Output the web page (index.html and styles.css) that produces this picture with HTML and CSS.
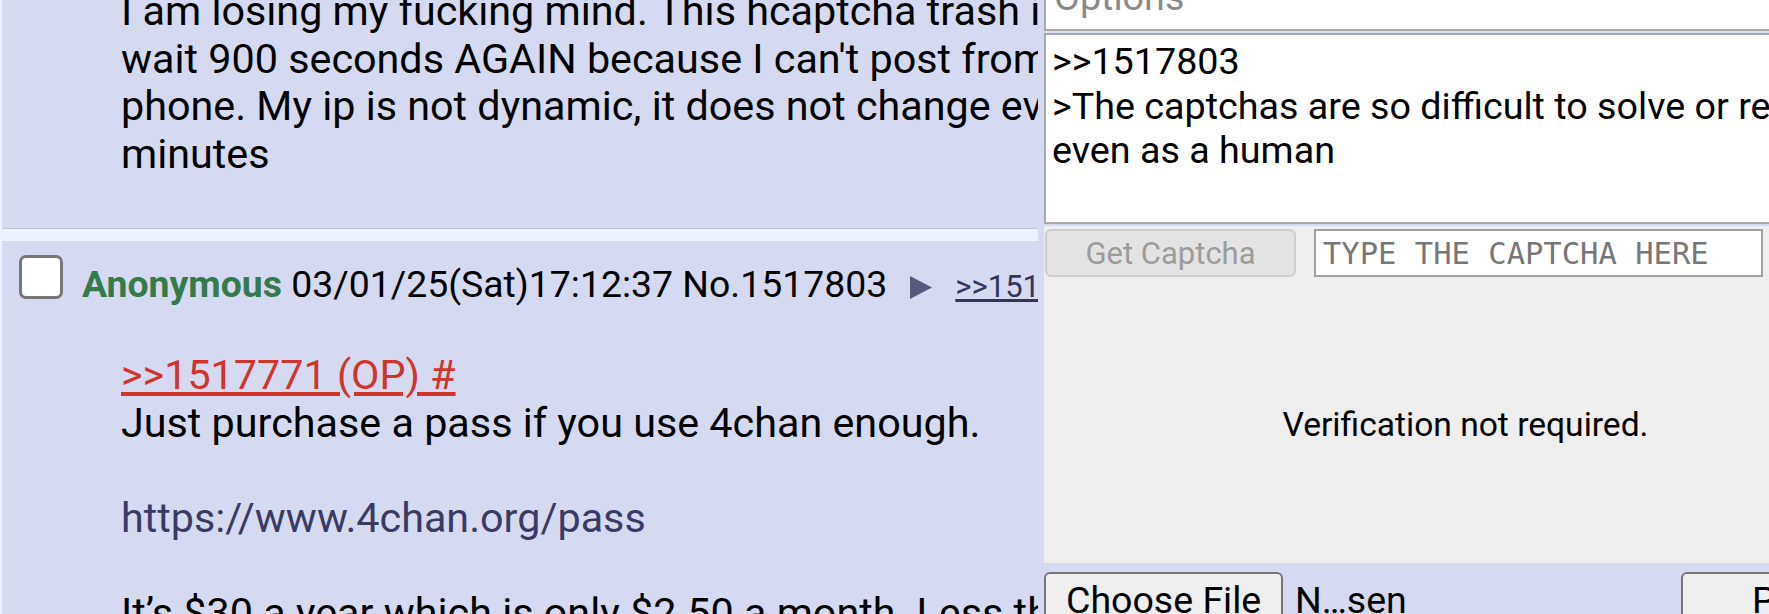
FILE: index.html
```html
<!DOCTYPE html>
<html lang="en">
<head>
<meta charset="utf-8">
<title>Thread</title>
<link rel="stylesheet" href="styles.css">
</head>
<body>
<div class="thread">
  <div class="post post-first">
    <div class="message nowrap">I am losing my fucking mind. This hcaptcha trash is making me<br>wait 900 seconds AGAIN because I can't post from my<br>phone. My ip is not dynamic, it does not change every few<br>minutes</div>
  </div>
  <div class="post">
    <div class="post-header">
      <span class="checkbox"></span><span class="name">Anonymous</span> <span class="date">03/01/25(Sat)17:12:37</span> <span class="num">No.1517803</span><span class="menu-arrow"><svg width="22" height="23" viewBox="0 0 22 23"><polygon points="0,0 22,11.5 0,23" fill="#575a7e"/></svg></span><a class="backlink">&gt;&gt;1517851</a>
    </div>
    <div class="message nowrap"><a class="quotelink">&gt;&gt;1517771 (OP) #</a><br>Just purchase a pass if you use 4chan enough.<br><br><span class="url">https://www.4chan.org/pass</span><br><br>It’s $30 a year which is only $2.50 a month. Less than a coffee.</div>
  </div>
</div>

<form class="quick-reply">
  <div class="field options">Options</div>
  <div class="field comment">&gt;&gt;1517803<br>&gt;The captchas are so difficult to solve or read<br>even as a human</div>
  <div class="captcha">
    <div class="captcha-row">
      <span class="get-captcha">Get Captcha</span>
      <span class="captcha-input">TYPE THE CAPTCHA HERE</span>
    </div>
    <div class="captcha-msg">Verification not required.</div>
  </div>
  <div class="bottom-row">
    <div class="file-input">
      <span class="file-btn">Choose File</span>
      <span class="file-name">N…sen</span>
    </div>
    <span class="post-btn">Post</span>
  </div>
</form>
</body>
</html>
```

FILE: styles.css
```css
html, body {
  margin: 0;
  padding: 0;
}
body {
  background: #eef2ff;
  font-family: Roboto, "Liberation Sans", sans-serif;
  color: #000;
  overflow: hidden;
  width: 1769px;
  height: 614px;
  position: relative;
}
.thread {
  margin-top: -12px;
}
.post {
  background: #d6daf0;
  margin-left: 2px;
  width: 1036px;
  border-bottom: 1px solid #b7c5d9;
  margin-bottom: 12px;
  overflow: hidden;
  padding-top: 14px;
}
.post-first {
  padding-top: 0;
  padding-bottom: 50px;
}
.message {
  padding-left: 119px;
  font-size: 41.3px;
  line-height: 47.5px;
}
.nowrap {
  white-space: nowrap;
}
.post-header {
  font-size: 37.4px;
  line-height: 44px;
  white-space: nowrap;
  padding-left: 17px;
  margin-bottom: 43px;
}
.checkbox {
  display: inline-block;
  width: 38px;
  height: 38px;
  border: 3px solid #777;
  border-radius: 7px;
  background: #fff;
  vertical-align: -2px;
  margin-right: 19px;
}
.name {
  color: #347a4d;
  font-weight: 700;
}
.menu-arrow {
  display: inline-block;
  margin-left: 23px;
  vertical-align: -2px;
  line-height: 0;
}
.backlink {
  margin-left: 23px;
  font-size: 31px;
  color: #34345c;
  text-decoration: underline;
}
.quotelink {
  color: #d0342c;
  text-decoration: underline;
}
.url {
  color: #3a3a64;
}

/* Quick reply overlay */
.quick-reply {
  position: absolute;
  left: 1038px;
  top: -37px;
  width: 842px;
  padding: 0 0 0 6px;
  background: #d6daf0;
  margin: 0;
  display: flex;
  flex-direction: column;
}
.field {
  background: #fff;
  border: 2px solid #a9a9a9;
  font-size: 37.7px;
  white-space: nowrap;
  overflow: hidden;
}
.options {
  padding: 10px 8px;
  line-height: 44px;
  color: #8a8a8a;
}
.comment {
  margin-top: 2px;
  height: 179px;
  padding: 4px 6px;
  line-height: 44.5px;
}
.captcha {
  margin-top: 2px;
  background: #eeeeee;
  height: 334px;
  padding: 3px 0 0 1px;
  display: flex;
  flex-direction: column;
}
.captcha-row {
  display: flex;
  gap: 18px;
  height: 48px;
}
.get-captcha {
  box-sizing: border-box;
  width: 251px;
  height: 48px;
  border: 2px solid #cdcdcd;
  border-radius: 6px;
  background: #e3e3e3;
  color: #9c9c9c;
  font-size: 31px;
  display: flex;
  align-items: center;
  justify-content: center;
}
.captcha-input {
  box-sizing: border-box;
  width: 449px;
  height: 48px;
  border: 2px solid #a0a0a0;
  background: #fff;
  color: #777;
  font-family: "DejaVu Sans Mono", monospace;
  font-size: 30.5px;
  padding-left: 7px;
  display: flex;
  align-items: center;
  white-space: nowrap;
}
.captcha-msg {
  flex: 1;
  display: flex;
  align-items: center;
  justify-content: center;
  padding-top: 8px;
  font-size: 33.6px;
}
.bottom-row {
  margin-top: 9px;
  display: flex;
  align-items: flex-start;
  gap: 11px;
  font-size: 37.5px;
}
.file-input {
  width: 626px;
  display: flex;
  align-items: flex-start;
  gap: 12px;
  white-space: nowrap;
}
.file-btn, .post-btn {
  box-sizing: border-box;
  height: 60px;
  border: 2px solid #767676;
  border-radius: 6px;
  background: #efefef;
  padding: 4px 20px 0 20px;
  line-height: 44px;
}
.file-btn {
  width: 239px;
}
.file-name {
  padding-top: 6px;
  line-height: 44px;
}
.post-btn {
  padding-left: 69px;
  width: 200px;
}
```
